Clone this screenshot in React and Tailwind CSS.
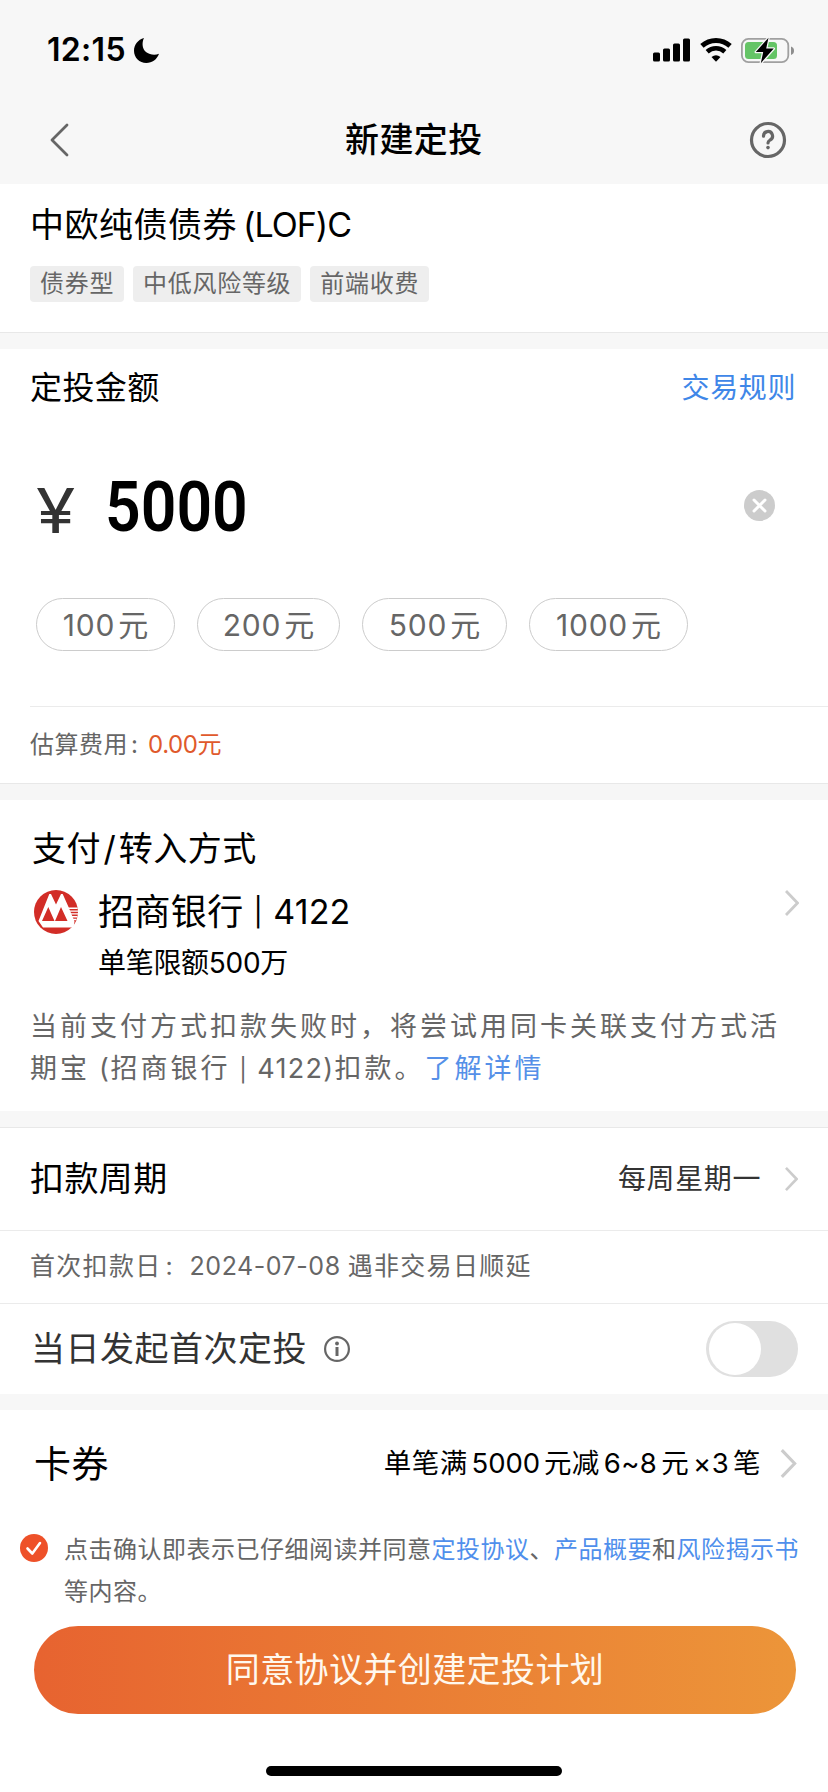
import React from 'react';
import clsx from 'clsx';

const AMOUNTS = [
  { value: 100, width: 'w-[139px]' },
  { value: 200, width: 'w-[143px]' },
  { value: 500, width: 'w-[145px]' },
  { value: 1000, width: 'w-[159px]' },
];

const TAGS = ['债券型', '中低风险等级', '前端收费'];

const Chevron = ({ className }) => (
  <svg viewBox="0 0 14 26" fill="none" stroke="#cccccc" strokeWidth="2.8" className={className} aria-hidden="true">
    <path d="M1 1l11.5 12L1 25" />
  </svg>
);

const StatusBar = () => (
  <div className="flex h-24 items-center justify-between pt-1 pl-[47px] pr-[33px]">
    <div className="flex items-center gap-[8px]">
      <span className="text-[32px] leading-none font-semibold tracking-[0.3px]">12:15</span>
      <svg width="25" height="25" viewBox="0 0 25 25" aria-hidden="true">
        <path d="M10 0C4 1.700 0 6.800 0 12.700C0 19.500 5.500 25 12.300 25C18.200 25 23 21.500 25 15.800C18.500 18.300 9 15.500 8.600 7C8.500 4.300 9 2 10 0Z" />
      </svg>
    </div>
    <div className="flex items-center">
      <svg width="38" height="24" viewBox="0 0 38 24" aria-hidden="true">
        <rect x="0" y="14.500" width="7" height="9" rx="1.500" />
        <rect x="10" y="10.500" width="7" height="13" rx="1.500" />
        <rect x="20" y="5.500" width="7" height="18" rx="1.500" />
        <rect x="30" y="0.500" width="7" height="23" rx="1.500" />
      </svg>
      <svg width="32" height="24" viewBox="0 0 32 24" fill="none" stroke="#000" className="ml-[9px]" aria-hidden="true">
        <path d="M1.950 7.900A21 21 0 0 1 30.050 7.900" strokeWidth="5" />
        <path d="M7.170 13.700A13.200 13.200 0 0 1 24.830 13.700" strokeWidth="4.600" />
        <path d="M16 23.700L11.500 19Q16 15.400 20.500 19Z" fill="#000" stroke="none" />
      </svg>
      <svg width="54" height="27" viewBox="0 0 54 27" fill="none" className="ml-[9px]" aria-hidden="true">
        <rect x="0.900" y="1.900" width="46.400" height="23.200" rx="6.500" stroke="#a0a0a0" strokeWidth="1.800" />
        <path d="M50 9.500v8.500c2-.6 3-2.300 3-4.250s-1-3.650-3-4.250z" fill="#8e8e8e" />
        <rect x="4" y="5" width="32" height="17" rx="3.500" fill="#65c466" />
        <path d="M27.500 .8L14.800 15h7.400L19.800 26.200L32.800 11.600h-7.600z" fill="#000" stroke="#f7f7f7" strokeWidth="2.500" strokeLinejoin="round" paintOrder="stroke" />
      </svg>
    </div>
  </div>
);

const NavBar = () => (
  <div className="flex h-[88px] items-center pl-[50px] pr-[41px]">
    <svg width="19" height="34" viewBox="0 0 19 34" fill="none" stroke="#666666" strokeWidth="2.800" strokeLinecap="round" strokeLinejoin="round" aria-hidden="true">
      <path d="M17 2L2 17L17 32" />
    </svg>
    <h1 className="ml-[276px] text-[34px] leading-none font-medium tracking-[0.4px]">新建定投</h1>
    <svg width="38" height="38" viewBox="0 0 38 38" fill="none" stroke="#666666" strokeWidth="3.200" strokeLinecap="round" className="ml-auto" aria-hidden="true">
      <circle cx="19" cy="19" r="16.500" />
      <path d="M14.500 15.200a4.500 4.500 0 1 1 6.600 3.800c-1.500.9-2.100 1.500-2.100 3" />
      <circle cx="19" cy="26.600" r="1.800" fill="#666666" stroke="none" />
    </svg>
  </div>
);

const BankLogo = () => (
  <svg width="44" height="44" viewBox="0 0 44 44" aria-hidden="true">
    <circle cx="22" cy="22" r="22" fill="#d22d27" />
    <path d="M4.500 31L15.300 4H17L22 14.500L27 4H28.700L34.300 16.500L40.500 31.500L39.500 37.500H9Z" fill="#fff" />
    <path d="M8 31L14.300 17L20.500 31ZM21 31L27 17L33.500 31Z" fill="#d22d27" />
    <path d="M34 18.300H43.700M35 21.100H44M36 23.900H44M37 26.700H43.500M38 29.500H42.500" stroke="#fff" strokeWidth="1.400" />
  </svg>
);

const App = () => {
  return (
    <div className="flex h-[1792px] w-[828px] flex-col overflow-hidden bg-white font-['Inter','Noto_Sans_CJK_SC',sans-serif] whitespace-nowrap text-black">
      <header className="bg-[#f7f7f7]">
        <StatusBar />
        <NavBar />
      </header>

      {/* Fund */}
      <section className="h-[148px] px-[30px] pt-[24px]">
        <h2 className="text-[34px] leading-[34px] tracking-[0.5px]">
          中欧纯债债券<span className="ml-[6px] tracking-[-1px]">(LOF)C</span>
        </h2>
        <div className="mt-[24px] flex gap-[9px]">
          {TAGS.map((tag) => (
            <span key={tag} className="flex h-9 items-center rounded-[4px] bg-[#eeeeee] px-[10px] text-[24px] leading-none tracking-[0.700px] text-[#666666]">
              {tag}
            </span>
          ))}
        </div>
      </section>
      <div className="h-[17px] border-t border-[#e8e8e8] bg-[#f7f7f7]" />

      {/* Amount */}
      <section className="h-[434px]">
        <div className="flex h-[78px] items-center justify-between pl-[30px] pr-[32px]">
          <h2 className="text-[32px] leading-none tracking-[0.4px]">定投金额</h2>
          <a className="text-[28px] leading-none tracking-[0.6px] text-[#3f87e8]">交易规则</a>
        </div>
        <div className="mt-[36px] flex h-[84px] items-center pl-9 pr-[53px]">
          <span className="mt-[11px] w-[69px]">
            <span className="inline-block origin-left scale-x-[1.15] text-[62px] leading-none text-[#333333]">¥</span>
          </span>
          <span className="mt-[3px] origin-left scale-x-[0.88] font-[Roboto] text-[71px] leading-none font-semibold">5000</span>
          <svg width="31" height="31" viewBox="0 0 31 31" className="ml-auto" aria-hidden="true">
            <circle cx="15.500" cy="15.500" r="15.500" fill="#cccccc" />
            <path d="M10 10L21 21M21 10L10 21" stroke="#fff" strokeWidth="3" strokeLinecap="round" />
          </svg>
        </div>
        <div className="mt-[51px] flex gap-[22px] pl-9">
          {AMOUNTS.map(({ value, width }) => (
            <button
              key={value}
              className={clsx('flex h-[53px] items-center justify-center gap-[3px] rounded-full border border-[#cccccc] text-[30px] leading-none text-[#666666]', width)}
            >
              <span className="tracking-[0.8px]">{value}</span>
              <span>元</span>
            </button>
          ))}
        </div>
        <div className="mt-[55px] ml-[30px] flex h-[77px] items-center border-t border-[#ebebeb] text-[24px] leading-none tracking-[0.5px] text-[#666666]">
          <span>估算费用</span>
          <span className="w-[20px] pl-[3px]">:</span>
          <span className="tracking-[-0.4px] text-[#e0592c]">0.00元</span>
        </div>
      </section>
      <div className="h-[17px] border-t border-[#e8e8e8] bg-[#f6f6f6]" />

      {/* Payment */}
      <section className="h-[311px] pl-[30px] pt-[32px]">
        <h2 className="ml-[2px] text-[34px] leading-[34px] tracking-[0.5px]">
          支付<span className="mx-[2.500px]">/</span>转入方式
        </h2>
        <div className="mt-[16px] flex pr-[29px]">
          <div className="mt-[8px] ml-1 w-[64px]">
            <BankLogo />
          </div>
          <div>
            <div className="flex h-[60px] items-center text-[36px] leading-none tracking-[0.4px]">
              <span>招商银行</span>
              <span className="ml-[10px] text-[28px]">|</span>
              <span className="ml-[10px] text-[34px] tracking-[0.100px]">4122</span>
            </div>
            <div className="h-[42px] text-[28px] leading-[42px] tracking-[-0.3px]">单笔限额500万</div>
          </div>
          <Chevron className="mt-[8px] ml-auto h-[26px] w-[14px]" />
        </div>
        <p className="mt-[22px] text-[27px] leading-[42px] tracking-[3px] text-[#666666]">
          当前支付方式扣款失败时，将尝试用同卡关联支付方式活
          <br />
          期宝<span className="tracking-[1.500px]"> (</span>招商银行<span className="tracking-[1.300px]"> <span className="text-[23px]">|</span> 4122)</span>扣款。
          <a className="text-[#5590e8]">了解详情</a>
        </p>
      </section>
      <div className="h-[17px] border-b border-[#e8e8e8] bg-[#f7f7f7]" />

      {/* Schedule */}
      <section className="h-[266px]">
        <div className="flex h-[102px] items-center pl-[30px] pr-[30px]">
          <h2 className="text-[34px] leading-none tracking-[0.4px]">扣款周期</h2>
          <span className="ml-auto text-[28px] leading-none tracking-[0.6px] text-[#333333]">每周星期一</span>
          <Chevron className="ml-[24px] h-[24px] w-[13px]" />
        </div>
        <div className="flex h-[74px] items-center border-y border-[#ebebeb] pb-px pl-[30px] text-[25px] leading-none tracking-[1.300px] text-[#666666]">
          <span>首次扣款日</span>
          <span className="ml-1 w-[24px]">:</span>
          <span className="tracking-[0.550px]">2024-07-08</span>
          <span className="ml-[7px]">遇非交易日顺延</span>
        </div>
        <div className="flex h-[90px] items-center pl-[31px] pr-[30px] text-[#333333]">
          <span className="text-[34px] leading-none tracking-[0.5px]">当日发起首次定投</span>
          <svg width="26" height="26" viewBox="0 0 26 26" fill="none" className="ml-[17px]" aria-hidden="true">
            <circle cx="13" cy="13" r="11.900" stroke="#666666" strokeWidth="2.200" />
            <circle cx="13" cy="7.500" r="1.900" fill="#666666" />
            <path d="M13 11v9" stroke="#666666" strokeWidth="3" />
          </svg>
          <div className="ml-auto flex h-14 w-[92px] items-center rounded-full bg-[#e0e0e0] pl-[3px]">
            <div className="size-[52px] rounded-full bg-white" />
          </div>
        </div>
      </section>
      <div className="h-4 bg-[#f7f7f7]" />

      {/* Coupon */}
      <section className="flex h-[107px] items-center pl-[34px] pr-[31px]">
        <h2 className="mt-[2px] text-[37px] leading-none tracking-[0.6px]">卡券</h2>
        <div className="ml-auto flex items-center gap-[4px] text-[27.500px] leading-none tracking-[0.400px]">
          <span>单笔满</span>
          <span className="tracking-[-0.100px]">5000</span>
          <span>元减</span>
          <span>6~8</span>
          <span>元</span>
          <span>×3</span>
          <span>笔</span>
        </div>
        <Chevron className="ml-[19px] h-[29px] w-[17px]" />
      </section>

      {/* Agreement */}
      <section className="flex h-[109px] pl-5 pt-[12px]">
        <svg width="28" height="28" viewBox="0 0 28 28" fill="none" className="mt-[5px]" aria-hidden="true">
          <circle cx="14" cy="14" r="14" fill="#ee5129" />
          <path d="M7.500 14.500L12.300 19.500L20 9" stroke="#fff" strokeWidth="2.600" strokeLinecap="round" strokeLinejoin="round" />
        </svg>
        <p className="ml-4 text-[24px] leading-[42px] tracking-[0.500px] text-[#666666]">
          点击确认即表示已仔细阅读并同意<a className="text-[#4f8fec]">定投协议</a>、<a className="text-[#4f8fec]">产品概要</a>和<a className="text-[#4f8fec]">风险揭示书</a>
          <br />
          等内容。
        </p>
      </section>
      <button className="ml-[34px] h-[88px] w-[762px] rounded-full bg-linear-to-r from-[#e76330] to-[#ec9539] text-[34px] leading-none tracking-[0.4px] text-[#fff8ee]">
        同意协议并创建定投计划
      </button>
      <div className="mt-[52px] ml-[266px] h-[10px] w-[296px] rounded-full bg-black" />
    </div>
  );
};

export default App;
